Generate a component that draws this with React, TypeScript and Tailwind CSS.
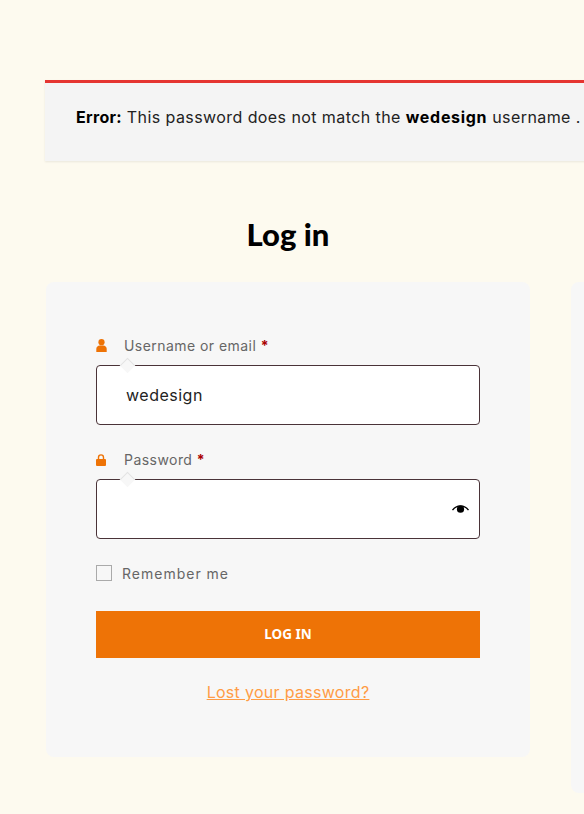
function UserIcon() {
  return (
    <svg width="11" height="13" viewBox="0 0 11 13" className="fill-[#ee7306]">
      <circle cx="5.5" cy="3.2" r="3.1" />
      <path d="M0.3 13v-3.2C0.3 7.8 2 6.4 3.6 6.4h3.8c1.6 0 3.3 1.4 3.3 3.4V13z" />
    </svg>
  );
}

function LockIcon() {
  return (
    <svg width="10" height="12" viewBox="0 0 10 12" className="fill-[#ee7306]">
      <path d="M1.8 5V3.4a3.2 3.2 0 0 1 6.4 0V5H6.8V3.4a1.8 1.8 0 0 0-3.6 0V5z" />
      <rect x="0" y="5" width="10" height="7" rx="1" />
    </svg>
  );
}

function EyeIcon() {
  return (
    <svg width="17" height="9" viewBox="0 0 17 9" className="absolute right-[10px] top-[25px]">
      <path d="M0.5 5.2C3 1.6 5.6 0.8 8.5 0.8s5.5 0.8 8 4.4" fill="none" stroke="#000" strokeWidth="1.3" />
      <circle cx="8.5" cy="4.2" r="3.6" fill="#000" />
    </svg>
  );
}

function Field({ icon, label, value, eye }: { icon: React.ReactNode; label: string; value?: string; eye?: boolean }) {
  return (
    <div>
      <div className="flex items-center h-[26px] mb-[7px]">
        <span className="w-[28px] flex items-center pt-px">{icon}</span>
        <span className="text-[14px] text-[#666] tracking-[0.45px]">
          {label} <span className="text-[#a00] font-bold">*</span>
        </span>
      </div>
      <div className="relative h-[60px] bg-white border border-[#4a3338] rounded-[4px] flex items-center pl-[29px] pb-px text-[16px] text-[#222] tracking-[0.5px]">
        {/* little notch over the field border */}
        <span className="absolute top-[-6px] left-[25px] w-[11px] h-[11px] rotate-45 bg-[#f7f7f7] border-l border-t border-[#e2e2e2]" />
        {value}
        {eye && <EyeIcon />}
      </div>
    </div>
  );
}

export default function App() {
  return (
    <div className="h-[814px] w-[584px] overflow-hidden bg-[#fdfaef] pt-[80px] pl-[45px] font-['Inter','Noto_Sans',sans-serif]">
      <div className="w-[600px] h-[81px] bg-[#f4f4f4] border-t-[3px] border-[#e53531] shadow-[0_1px_2px_rgba(0,0,0,0.08)] pl-[31px] pt-[22px] text-[16px] leading-[24px] tracking-[0.42px] text-[#222] whitespace-nowrap">
        <strong className="text-black tracking-[0.3px]">Error:</strong> This password does not match the{" "}
        <strong className="text-black tracking-[0.7px]">wedesign</strong> username .
      </div>

      <div className="w-[484px] ml-px mt-[54px] mb-[28px] h-[39px] flex items-center justify-center text-[31px] font-black text-black font-['Lato',sans-serif]">
        Log in
      </div>

      <div className="flex gap-[41px] items-start ml-px">
        <div className="w-[484px] h-[475px] shrink-0 bg-[#f7f7f7] rounded-[8px] px-[50px] pt-[50px]">
          <div className="flex flex-col gap-[21px]">
            <Field icon={<UserIcon />} label="Username or email" value="wedesign" />
            <Field icon={<LockIcon />} label="Password" eye />
          </div>
          <div className="flex items-center mt-[26px] h-[16px] text-[14px] text-[#666] tracking-[1px]">
            <span className="w-[16px] h-[16px] border border-[#aaa] bg-[#f7f7f7] mr-[10px]" />
            Remember me
          </div>
          <button className="block w-full h-[47px] mt-[30px] bg-[#ee7306] text-white text-[13.5px] font-bold font-['Noto_Sans',sans-serif]">
            LOG IN
          </button>
          <div className="mt-[24px] text-center text-[16px] leading-[20px]">
            <a className="text-[#ff9c45] underline tracking-[0.3px]">Lost your password?</a>
          </div>
        </div>
        <div className="w-[200px] h-[511px] shrink-0 bg-[#f7f7f7] rounded-[8px]" />
      </div>
    </div>
  );
}
